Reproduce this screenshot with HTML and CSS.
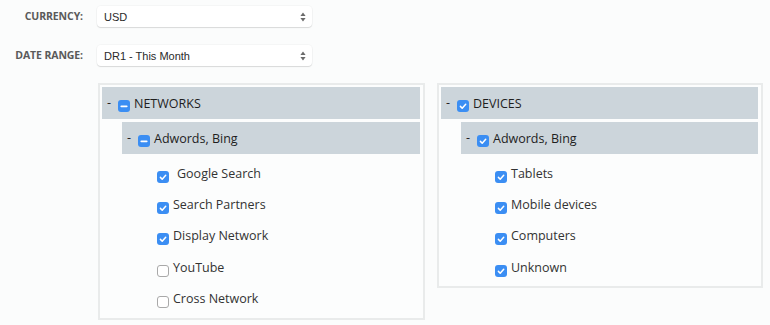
FILE: index.html
```html
<!DOCTYPE html>
<html>
<head>
<meta charset="utf-8">
<link rel="stylesheet" href="styles.css">
</head>
<body>
<div class="page">
  <div class="field">
    <label class="label">CURRENCY:</label>
    <div class="select"><span class="value">USD</span>
      <svg class="arrows" width="6" height="10" viewBox="0 0 6 10"><path d="M3 0.5 L5.6 4 L0.4 4 Z M3 9.5 L5.6 6 L0.4 6 Z" fill="#6b6b6b"/></svg>
    </div>
  </div>
  <div class="field">
    <label class="label">DATE RANGE:</label>
    <div class="select"><span class="value">DR1 - This Month</span>
      <svg class="arrows" width="6" height="10" viewBox="0 0 6 10"><path d="M3 0.5 L5.6 4 L0.4 4 Z M3 9.5 L5.6 6 L0.4 6 Z" fill="#6b6b6b"/></svg>
    </div>
  </div>

  <div class="panels">
    <div class="panel panel-left">
      <div class="group-row">
        <span class="dash">-</span>
        <span class="cb on"><svg width="12" height="12" viewBox="0 0 12 12"><path d="M3.3 6.3 H8.7" stroke="#fff" stroke-width="1.8" stroke-linecap="round"/></svg></span>
        <span class="gtext">NETWORKS</span>
      </div>
      <div class="group-row sub">
        <span class="dash">-</span>
        <span class="cb on"><svg width="12" height="12" viewBox="0 0 12 12"><path d="M3.3 6.3 H8.7" stroke="#fff" stroke-width="1.8" stroke-linecap="round"/></svg></span>
        <span class="gtext">Adwords, Bing</span>
      </div>
      <ul class="items">
        <li><span class="cb on"><svg width="12" height="12" viewBox="0 0 12 12"><path d="M3.4 6.4 L5.2 8.2 L8.7 4.3" fill="none" stroke="#fff" stroke-width="1.5" stroke-linecap="round" stroke-linejoin="round"/></svg></span><span class="itext wide">Google Search</span></li>
        <li><span class="cb on"><svg width="12" height="12" viewBox="0 0 12 12"><path d="M3.4 6.4 L5.2 8.2 L8.7 4.3" fill="none" stroke="#fff" stroke-width="1.5" stroke-linecap="round" stroke-linejoin="round"/></svg></span><span class="itext">Search Partners</span></li>
        <li><span class="cb on"><svg width="12" height="12" viewBox="0 0 12 12"><path d="M3.4 6.4 L5.2 8.2 L8.7 4.3" fill="none" stroke="#fff" stroke-width="1.5" stroke-linecap="round" stroke-linejoin="round"/></svg></span><span class="itext">Display Network</span></li>
        <li><span class="cb off"></span><span class="itext">YouTube</span></li>
        <li><span class="cb off"></span><span class="itext">Cross Network</span></li>
      </ul>
    </div>

    <div class="panel panel-right">
      <div class="group-row">
        <span class="dash">-</span>
        <span class="cb on"><svg width="12" height="12" viewBox="0 0 12 12"><path d="M3.4 6.4 L5.2 8.2 L8.7 4.3" fill="none" stroke="#fff" stroke-width="1.5" stroke-linecap="round" stroke-linejoin="round"/></svg></span>
        <span class="gtext">DEVICES</span>
      </div>
      <div class="group-row sub">
        <span class="dash">-</span>
        <span class="cb on"><svg width="12" height="12" viewBox="0 0 12 12"><path d="M3.4 6.4 L5.2 8.2 L8.7 4.3" fill="none" stroke="#fff" stroke-width="1.5" stroke-linecap="round" stroke-linejoin="round"/></svg></span>
        <span class="gtext">Adwords, Bing</span>
      </div>
      <ul class="items">
        <li><span class="cb on"><svg width="12" height="12" viewBox="0 0 12 12"><path d="M3.4 6.4 L5.2 8.2 L8.7 4.3" fill="none" stroke="#fff" stroke-width="1.5" stroke-linecap="round" stroke-linejoin="round"/></svg></span><span class="itext">Tablets</span></li>
        <li><span class="cb on"><svg width="12" height="12" viewBox="0 0 12 12"><path d="M3.4 6.4 L5.2 8.2 L8.7 4.3" fill="none" stroke="#fff" stroke-width="1.5" stroke-linecap="round" stroke-linejoin="round"/></svg></span><span class="itext">Mobile devices</span></li>
        <li><span class="cb on"><svg width="12" height="12" viewBox="0 0 12 12"><path d="M3.4 6.4 L5.2 8.2 L8.7 4.3" fill="none" stroke="#fff" stroke-width="1.5" stroke-linecap="round" stroke-linejoin="round"/></svg></span><span class="itext">Computers</span></li>
        <li><span class="cb on"><svg width="12" height="12" viewBox="0 0 12 12"><path d="M3.4 6.4 L5.2 8.2 L8.7 4.3" fill="none" stroke="#fff" stroke-width="1.5" stroke-linecap="round" stroke-linejoin="round"/></svg></span><span class="itext">Unknown</span></li>
      </ul>
    </div>
  </div>
</div>
</body>
</html>
```
FILE: styles.css
```css
html, body {
  margin: 0;
  padding: 0;
  background: #fbfcfc;
}
.page {
  padding-top: 5px;
  font-family: "Open Sans", sans-serif;
}
.field {
  display: flex;
  align-items: center;
  height: 22px;
  margin-bottom: 17px;
}
.label {
  width: 83px;
  text-align: right;
  font-size: 10.5px;
  font-weight: 700;
  color: #5a5a5a;
  margin-right: 14px;
  letter-spacing: -0.1px;
}
.select {
  width: 215px;
  height: 21px;
  box-sizing: border-box;
  background: #fff;
  border-radius: 4px;
  box-shadow: 0 1px 1px rgba(0,0,0,0.12), 0 0 0 1px rgba(0,0,0,0.025);
  display: flex;
  align-items: center;
  justify-content: space-between;
  padding: 1px 6px 0 7px;
}
.value {
  font-family: "Liberation Sans", Arial, sans-serif;
  font-size: 11px;
  color: #2a2a2a;
}
.arrows {
  display: block;
}
.panels {
  display: flex;
  align-items: flex-start;
  gap: 12px;
  padding-left: 98px;
  margin-top: 1px;
}
.panel {
  box-sizing: border-box;
  border: 2px solid #e9ebeb;
  background: #fcfdfd;
  padding: 2px 3px 4px 2px;
}
.panel-left {
  width: 327px;
  height: 237px;
}
.panel-right {
  width: 326px;
  height: 205px;
}
.group-row {
  display: flex;
  align-items: center;
  height: 32px;
  background: #ccd5db;
  padding-left: 5px;
  font-size: 12.5px;
  color: #1e1e1e;
}
.group-row.sub {
  margin-top: 3px;
  margin-left: 20px;
}
.dash {
  width: 11px;
  margin-top: -2px;
}
.gtext {
  margin-left: 4px;
}
.cb {
  display: inline-block;
  width: 12px;
  height: 12px;
  box-sizing: border-box;
  border-radius: 3px;
  margin-top: 6px;
  flex: none;
}
.cb svg {
  display: block;
}
.cb.on {
  background: #3b8ef3;
}
.cb.off {
  background: #fff;
  border: 1px solid #a9a9a9;
}
.items {
  list-style: none;
  margin: 4px 0 0 0;
  padding: 0 0 0 55px;
}
.panel-right .items {
  padding-left: 54px;
}
.items li {
  display: flex;
  align-items: center;
  height: 31.3px;
  font-size: 12.5px;
  color: #333;
}
.itext {
  margin-left: 4px;
  margin-top: -1px;
}
.itext.wide {
  margin-left: 8px;
}
```
